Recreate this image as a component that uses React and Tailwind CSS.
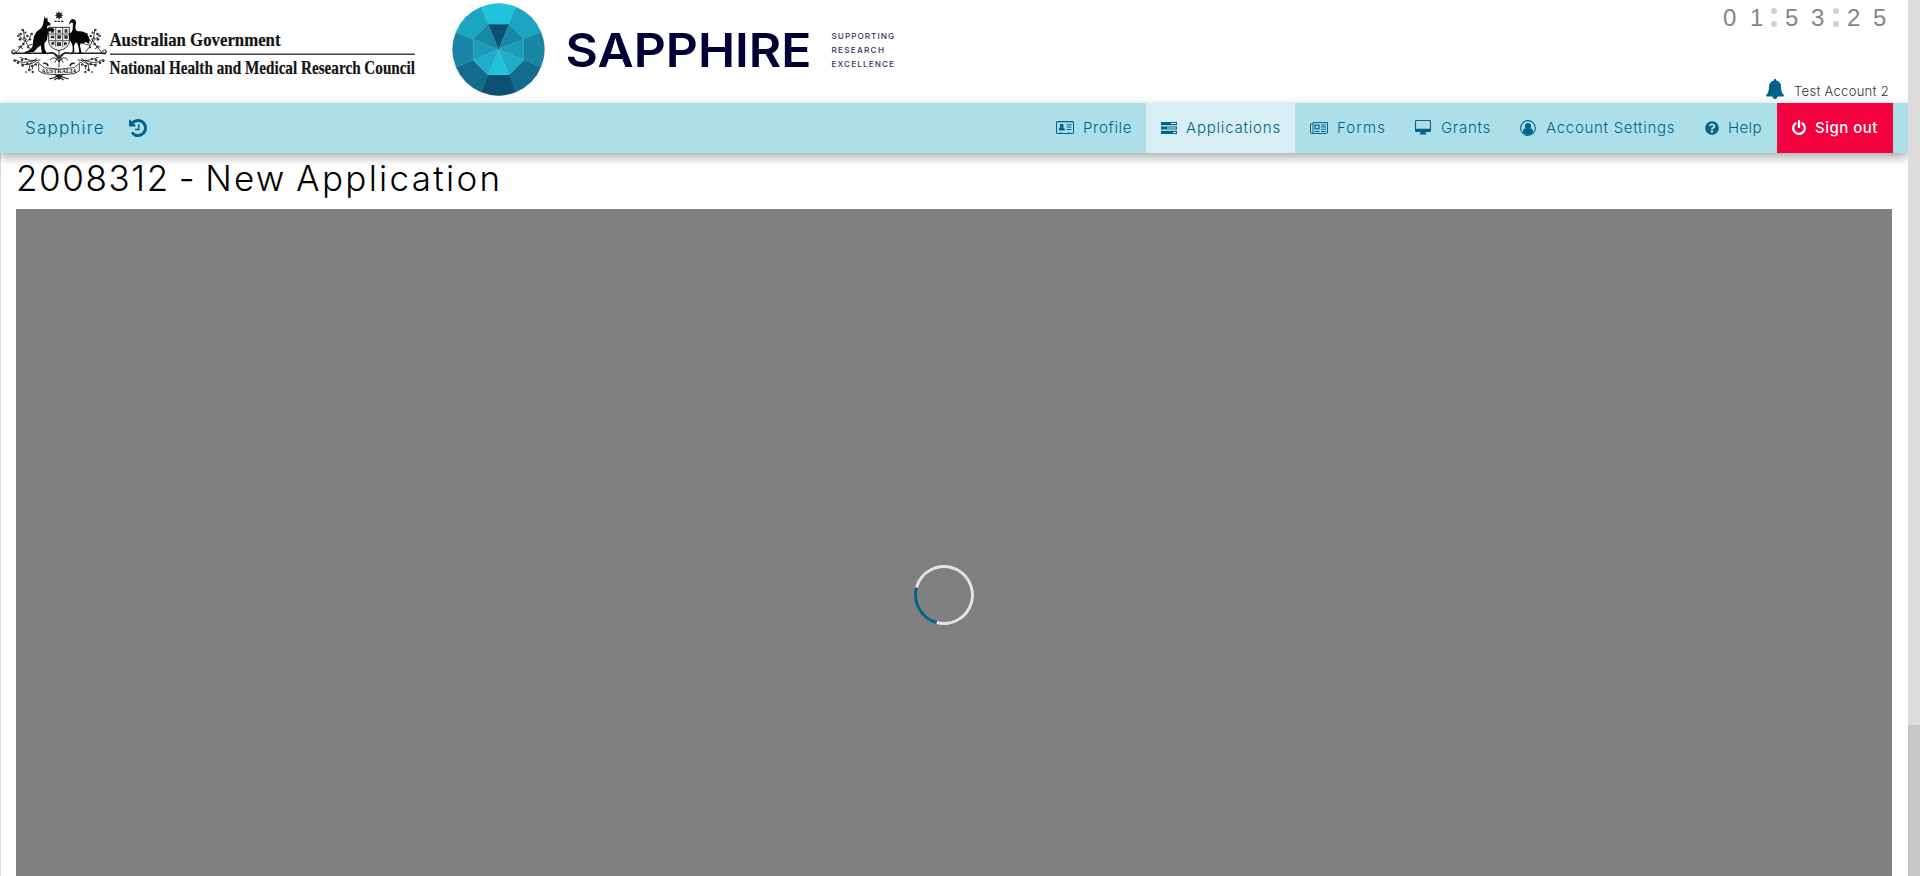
import React from 'react';
import { FaQuestionCircle } from 'react-icons/fa';

const flip = 'translate(354 0) scale(-1 1)';

function Sprigs() {
  return (
    <g>
      <g fill="none" stroke="#222" strokeWidth="2.6" strokeLinecap="round">
        <path d="M38 150q-8 8 0 12 10 2 12-6M48 158q20-22 32-42M96 154q-22-22-26-62M76 122q-14-4-20-20M80 126q12-10 12-20M86 136q14-2 20-8M68 146q-10-8-14-6" />
        <path d="M60 172q30 14 60 8M48 180q20 14 50 2M64 192q20 6 44-8M88 206q-4-18 22-30M96 208q2-16 20-22" />
      </g>
      <g fill="#333">
        <circle cx="68" cy="90" r="4" /><circle cx="76" cy="98" r="3.4" /><circle cx="62" cy="102" r="3.8" />
        <circle cx="54" cy="108" r="3" /><circle cx="82" cy="108" r="3.8" /><circle cx="95" cy="102" r="4" />
        <circle cx="60" cy="118" r="4" /><circle cx="72" cy="114" r="3" /><circle cx="90" cy="118" r="3.6" />
        <circle cx="104" cy="124" r="3.5" /><circle cx="70" cy="132" r="4" /><circle cx="62" cy="140" r="3.6" />
        <circle cx="84" cy="142" r="3.4" /><circle cx="44" cy="182" r="4" /><circle cx="54" cy="188" r="4" />
        <circle cx="66" cy="180" r="3.6" /><circle cx="68" cy="196" r="4" /><circle cx="82" cy="192" r="4" />
        <circle cx="88" cy="210" r="4" /><circle cx="98" cy="216" r="3.5" /><circle cx="78" cy="176" r="3" />
        <circle cx="96" cy="198" r="3.6" /><circle cx="108" cy="194" r="3" /><circle cx="78" cy="216" r="2.6" />
      </g>
    </g>
  );
}

function CoatOfArms() {
  return (
    <svg className="block h-[100px] w-[110px] shrink-0" viewBox="0 0 330 300">
      <Sprigs />
      <g transform={flip}><Sprigs /></g>
      <path d="M177 33l3 7 7-3-3 7 6 2-6 3 3 6-7-2-3 6-3-6-7 2 3-6-6-3 6-2-3-7 7 3z" fill="#222" />
      <path d="M163 64h28" stroke="#222" strokeWidth="4" strokeDasharray="7 3" />
      <path d="M146 82h62v42q0 20-31 28-31-8-31-28z" fill="#eee" stroke="#333" strokeWidth="3" />
      <path d="M146 102h62M146 122h62M167 82v58M188 82v58" stroke="#444" strokeWidth="2.5" />
      <g fill="#333">
        <path d="M153 88h8v10h-8zM173 90h9v8h-9zM194 88h8v10h-8zM152 107h11v8h-11zM172 106h11v10h-11zM193 106h10v10h-10zM154 127l9-2v8l-8 3zM171 127h12v11h-12zM192 126l10 2-4 8-6-1z" />
      </g>
      <path d="M38 160h110M206 160h110M148 160q14-6 29 14 15-20 29-14" fill="none" stroke="#222" strokeWidth="4.5" />
      <path d="M316 160q6-10-4-11-7 3-2 7M38 160q-6-10 4-11 7 3 2 7" fill="none" stroke="#222" strokeWidth="2.5" />
      <path d="M134 48l3 9 5-5 1 12 9 7-1 5-9 2-1 7 16-1 6 4-2 6h-16l-2 12-2 14-8 10 1 16 6 14h-14l-4-24-8 6-12 13-28 5v-4q18-5 24-18l2-18q2-20 16-30 12-8 14-22z" fill="#050505" />
      <path d="M207 74Q209 58 219 57Q229 58 228 70L226 82Q226 92 234 94Q258 92 266 111Q271 121 268 132L257 126L248 131L242 130L240 138L245 160H234L238 156L235 139L231 128H226L222 138L223 156L213 160L218 153V139L213 126Q205 118 208 100Q218 96 218 86L219 70Q216 65 212 69Z" fill="#050505" />
      <path d="M142 163q14-16 28 9l7 12 7-12q14-25 28-9M150 180q14-16 27 6 13-22 27-6M164 188l13-22 13 22M177 152v50" fill="none" stroke="#333" strokeWidth="3" />
      <path d="M116 190l16 13q45 9 90 0l16-13v23l-16 8q-45 8-90 0l-16-8z" fill="#fafafa" stroke="#222" strokeWidth="2.5" />
      <path d="M130 190q12-2 14 8M224 190q-12-2-14 8" fill="none" stroke="#222" strokeWidth="5" />
      <text x="124" y="218" textLength="106" lengthAdjust="spacingAndGlyphs" fontFamily="Liberation Serif, serif" fontWeight="700" fontSize="16" fill="#222">AUSTRALIA</text>
      <path d="M148 237q16-2 29-12 13 10 29 12M163 222l28 18M191 222l-28 18M177 222v18" fill="none" stroke="#222" strokeWidth="3.5" />
      <circle cx="177" cy="230" r="7" fill="#222" />
    </svg>
  );
}

function GovernmentText() {
  return (
    <svg className="block h-[100px] w-[310px] shrink-0 overflow-visible" viewBox="110 0 310 100" fontFamily="Liberation Serif, serif" fontWeight="700" fontSize="19" fill="#141414" stroke="#141414" strokeWidth="0.2">
      <text x="109.5" y="46" textLength="171" lengthAdjust="spacingAndGlyphs">Australian Government</text>
      <path d="M110 54.3h305" stroke="#444" strokeWidth="1.4" />
      <text x="109.5" y="74" textLength="305.5" lengthAdjust="spacingAndGlyphs">National Health and Medical Research Council</text>
    </svg>
  );
}

const outer = ['#20c3dc', '#1ca5c2', '#1986a5', '#136b8d', '#0d5074', '#136b8d', '#1986a5', '#1ca5c2'];
const inner = ['#0d5074', '#1888a7', '#1c9cb9', '#1fadc9', '#20c3dc', '#1fadc9', '#1c9cb9', '#1888a7'];

function Gem() {
  return (
    <svg className="block h-[93px] w-[93px] shrink-0" viewBox="-46.5 -46.5 93 93">
      {outer.map((c, i) => (
        <path key={i} transform={`rotate(${i * 45})`} fill={c} stroke={c} strokeWidth="0.2" d="M-17.6 -42.5A46 46 0 0 1 17.6 -42.5L10.6 -25.3H-10.6Z" />
      ))}
      {inner.map((c, i) => (
        <path key={i} transform={`rotate(${i * 45})`} fill={c} stroke={c} strokeWidth="0.2" d="M0 0L-10.6 -25.3H10.6Z" />
      ))}
    </svg>
  );
}

function Wordmark() {
  return (
    <svg className="block h-[100px] w-[345px] shrink-0" viewBox="560 0 345 100" fontFamily="Inter, sans-serif" fill="#020035">
      <text x="565.5" y="66.8" fontSize="46.5" fontWeight="600" textLength="246" lengthAdjust="spacingAndGlyphs">SAPPHIRE</text>
      <g fontSize="8.2" fontWeight="500" fill="#35325f">
        <text x="831.5" y="38.6" textLength="62.5">SUPPORTING</text>
        <text x="831.5" y="52.9" textLength="52.5">RESEARCH</text>
        <text x="831.5" y="67" textLength="62.5">EXCELLENCE</text>
      </g>
    </svg>
  );
}

function HistoryIcon() {
  return (
    <svg className="h-[18px] w-[18px]" viewBox="0 128 1536 1536" fill="currentColor">
      <path d="M1536 896q0 156-61 298t-164 245-245 164-298 61q-172 0-327-72.5T177 1387q-7-10-6.5-22.5T179 1344l137-138q10-9 25-9 16 2 23 12 73 95 179 147t225 52q104 0 198.5-40.5T1130 1258t109.5-163.5T1280 896t-40.5-198.5T1130 534 966.5 424.5 768 384q-98 0-188 35.5T420 521l137 138q31 30 14 69-17 40-59 40H64q-26 0-45-19T0 704V256q0-42 40-59 39-17 69 14l130 129q107-101 244.5-156.5T768 128q156 0 298 61t245 164 164 245 61 298zm-640-288v448q0 14-9 23t-23 9H544q-14 0-23-9t-9-23v-64q0-14 9-23t23-9h224V608q0-14 9-23t23-9h64q14 0 23 9t9 23z" />
    </svg>
  );
}

function BellIcon() {
  return (
    <svg className="h-5 w-[18px] text-[#00648a]" viewBox="0 0 18 20" fill="currentColor">
      <path d="M9 0c.8 0 1.3.6 1.2 1.4C13.300 2 15 4.500 15 7.500c0 4.500 1 6.700 3 8.700 0 .8-.5 1.300-1.200 1.300H1.200C.5 17.500 0 17 0 16.200c2-2 3-4.200 3-8.700 0-3 1.700-5.500 4.800-6.100C7.700.6 8.200 0 9 0zM6.500 17.500h5C11.500 19 10.400 20 9 20s-2.500-1-2.500-2.500z" />
    </svg>
  );
}

function ProfileIcon() {
  return (
    <svg className="h-[14px] w-[18px]" viewBox="0 0 18 14" fill="currentColor">
      <path fillRule="evenodd" d="M1.500 0h15Q18 0 18 1.500v10.200q0 1.300-1.500 1.300h-15Q0 13 0 11.700V1.500Q0 0 1.500 0zM1 2v9.700q0 .3.500.3H4v-.8h1.500v.8h7v-.8H14v.8h2.500q.5 0 .5-.3V2q0-.8-.7-.8H1.700Q1 1.200 1 2z" />
      <circle cx="5.7" cy="4.7" r="2" />
      <path d="M2.700 9.600q0-3.400 1.800-3.400 1.200.8 2.400 0 1.900 0 1.900 3.400zM10.500 3.200h5v1h-5zM10.500 5.500h5v1h-5zM10.500 8h5v1h-5z" />
    </svg>
  );
}

function TasksIcon() {
  return (
    <svg className="h-3 w-4" viewBox="0 0 16 12" fill="currentColor">
      <path fillRule="evenodd" d="M0 0h16v3.200H0zM10 1.100v1h5v-1zM0 4.400h16v3.200H0zM6 5.500v1h9v-1zM0 8.800h16V12H0zM12 9.900v1h3v-1z" />
    </svg>
  );
}

function FormsIcon() {
  return (
    <svg className="h-3 w-[18px]" viewBox="0 0 18 12">
      <path d="M3 10V.6h14.500V10q0 1.500-1.300 1.500H1.800Q.5 11.500.5 10V2H3M3 10q0 1.500-1.200 1.500" fill="none" stroke="currentColor" />
      <path fillRule="evenodd" fill="currentColor" d="M4.500 2.500h5.200v5H4.500zm1.200 1.200v2.600h2.800V3.700zM11 2.500h5v1h-5zM11 4.600h5v1h-5zM11 6.700h5v1h-5zM4.500 8.900h5.200v1H4.500zM11 8.900h5v1h-5z" />
    </svg>
  );
}

function DesktopIcon() {
  return (
    <svg className="h-[15px] w-4" viewBox="0 0 16 15" fill="currentColor">
      <path fillRule="evenodd" d="M1.200 0h13.600Q16 0 16 1.200v9.600Q16 12 14.800 12h-4.400v1.300h.9V14.500H4.700v-1.200h.9V12H1.200Q0 12 0 10.800V1.200Q0 0 1.200 0zM1.100 1.400v7.300h13.800V1.400q0-.3-.3-.3H1.400q-.3 0-.3.300z" />
    </svg>
  );
}

function UserIcon() {
  return (
    <svg className="h-4 w-4" viewBox="0 0 16 16">
      <circle cx="8" cy="8" r="7.4" fill="none" stroke="currentColor" strokeWidth="1.1" />
      <circle cx="8" cy="6" r="3.1" fill="currentColor" />
      <path fill="currentColor" d="M2.800 12.300q.3-3.900 2.700-4.100 2.500 1.800 5 0 2.400.2 2.700 4.100Q11 14.800 8 14.800t-5.200-2.500z" />
    </svg>
  );
}

function PowerIcon() {
  return (
    <svg className="h-[15px] w-[14px]" viewBox="0 0 1536 1664" fill="currentColor">
      <path d="M1536 896q0 156-61 298t-164 245-245 164-298 61-298-61-245-164T61 1194 0 896q0-182 80.500-343T307 283q43-32 95.500-25t83.500 50q32 42 24.500 94.500T461 487q-98 74-151.500 181T256 896q0 104 40.500 198.500T406 1258t163.500 109.500T768 1408t198.500-40.500T1130 1258t109.500-163.500T1280 896q0-121-53.500-228T1075 487q-42-32-49.500-84.500T1050 308q31-43 84-50t95 25q146 109 226.500 270t80.500 343zM896 128v640q0 52-38 90t-90 38-90-38-38-90V128q0-52 38-90t90-38 90 38 38 90z" />
    </svg>
  );
}

function NavItem({ icon, label, className, iconClass = 'w-[26px]' }) {
  return (
    <a className={`flex h-full shrink-0 items-center pl-[15px] ${className}`}>
      <span className={`flex shrink-0 items-center pb-px ${iconClass}`}>{icon}</span>
      <span className="whitespace-nowrap pt-px">{label}</span>
    </a>
  );
}

function Colon() {
  return (
    <span className="flex w-2 flex-col items-center gap-[7px]">
      <span className="size-1.5 rounded-full bg-[#d0d0d0]" />
      <span className="size-1.5 rounded-full bg-[#d0d0d0]" />
    </span>
  );
}

export default function App() {
  return (
    <div className="flex h-[876px] w-[1920px] overflow-hidden bg-white font-['Inter',sans-serif]">
      <div className="flex w-[1908px] shrink-0 flex-col">
        <header className="flex h-[103px] shrink-0 justify-between">
          <div className="flex">
            <CoatOfArms />
            <GovernmentText />
            <div className="ml-8 pt-[3px]"><Gem /></div>
            <div className="ml-[15px]"><Wordmark /></div>
          </div>
          <div className="flex flex-col items-end justify-between pb-1 pr-[21px]">
            <div className="flex h-[35px] items-center font-['Liberation_Sans',sans-serif] text-2xl leading-none text-[#858585]">
              <span className="w-[27px]">0</span>
              <span className="w-[20px]">1</span>
              <Colon />
              <span className="ml-[7px] w-[26px]">5</span>
              <span className="w-[21px]">3</span>
              <Colon />
              <span className="ml-[7px] w-[26px]">2</span>
              <span className="w-[14px]">5</span>
            </div>
            <div className="flex items-center">
              <BellIcon />
              <span className="ml-[10px] w-[93px] whitespace-nowrap pt-[3px] text-[13px] font-light leading-4 tracking-[0.3px] text-[#333]">Test Account 2</span>
            </div>
          </div>
        </header>

        <nav className="relative z-10 flex h-[50px] shrink-0 items-center justify-between bg-[#addfe9] pr-[15px] text-[15px] font-light text-[#00648a] shadow-[0_4px_10px_rgba(0,0,0,0.35)]">
          <div className="flex items-center">
            <span className="ml-[25px] w-[104px] pt-px text-[17px] tracking-[1.2px]">Sapphire</span>
            <HistoryIcon />
          </div>
          <div className="flex h-full">
            <NavItem className="w-[105px] tracking-[0.7px]" iconClass="w-[27px]" icon={<ProfileIcon />} label="Profile" />
            <NavItem className="w-[149px] bg-[#d6eef4] tracking-[0.8px]" iconClass="w-[25px]" icon={<TasksIcon />} label="Applications" />
            <NavItem className="w-[105px] tracking-[1.1px]" iconClass="w-[27px]" icon={<FormsIcon />} label="Forms" />
            <NavItem className="w-[105px] tracking-[0.7px]" icon={<DesktopIcon />} label="Grants" />
            <NavItem className="w-[185px] tracking-[0.7px]" icon={<UserIcon />} label="Account Settings" />
            <NavItem className="w-[87px] tracking-[0.4px]" iconClass="w-[23px]" icon={<FaQuestionCircle size={14} />} label="Help" />
            <NavItem className="w-[116px] bg-[#f5003f] font-medium tracking-[0.5px] text-white" iconClass="w-[23px]" icon={<PowerIcon />} label="Sign out" />
          </div>
        </nav>

        <main className="flex min-h-0 flex-1 flex-col border-l border-[#d8d8d8] pl-[15px] pr-4">
          <h1 className="h-14 shrink-0 whitespace-nowrap pt-[4px] text-[35px] font-light leading-[42px] tracking-[1.6px] text-black [word-spacing:-2.5px]">
            2008312 - <span className="tracking-[2.2px]">New </span><span className="tracking-[2.3px]">Application</span>
          </h1>
          <div className="flex flex-1 justify-center bg-[#808080] pr-5 pt-[356px]">
            <div className="size-[60px] -rotate-[30deg] rounded-full border-[3px] border-[#e4e4e4] border-l-[#00648a]" />
          </div>
        </main>
      </div>
      <div className="relative z-20 flex flex-1 flex-col bg-[#dcdcdc] pt-[725px]">
        <div className="flex-1 border-l border-[#bfbfbf] bg-[#c8c8c8]" />
      </div>
    </div>
  );
}
